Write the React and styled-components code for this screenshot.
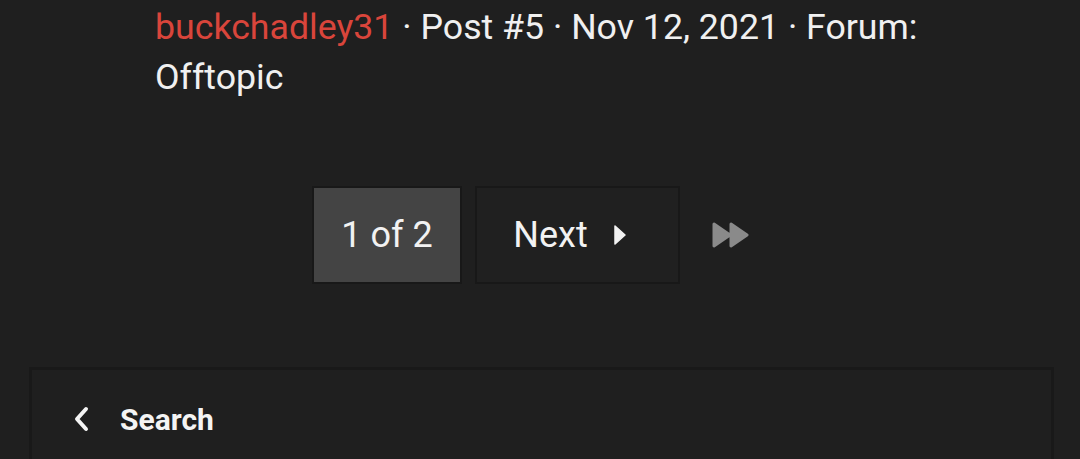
import React from 'react';
import styled, { createGlobalStyle } from 'styled-components';

const GlobalStyle = createGlobalStyle`
  html, body {
    margin: 0;
    padding: 0;
    background: #1f1f1f;
    font-family: Roboto, "Liberation Sans", sans-serif;
    overflow: hidden;
  }
`;

const Page = styled.div`
  width: 1080px;
  height: 459px;
  overflow: hidden;
  background: #1f1f1f;
  color: #f2f2f2;
`;

const Meta = styled.div`
  padding: 2px 140px 0 155px;
  font-size: 35.7px;
  line-height: 50px;
  color: #f0f0f0;
`;

const Author = styled.span`
  color: #d9453b;
  margin-right: 0.25em;
`;

const Pager = styled.div`
  display: flex;
  align-items: center;
  gap: 13px;
  margin: 84px 0 0 312px;
`;

const PageBox = styled.div`
  height: 98px;
  width: ${p => p.$w}px;
  box-sizing: border-box;
  display: flex;
  align-items: center;
  justify-content: center;
  gap: 26px;
  padding-right: ${p => p.$pr || 0}px;
  font-size: 36px;
  color: #f2f2f2;
  background: ${p => (p.$active ? '#444444' : '#202020')};
  border: 2px solid #181818;
`;

const Skip = styled.div`
  display: flex;
  align-items: center;
  margin-left: 19px;
`;

const Panel = styled.div`
  margin: 83px 26px 0 29px;
  height: 120px;
  box-sizing: border-box;
  border: 3px solid #191919;
  border-bottom: none;
  display: flex;
  align-items: flex-start;
  padding: 34px 0 0 40px;
  gap: 28px;
`;

const Title = styled.span`
  font-size: 30px;
  font-weight: 700;
  color: #f4f4f4;
  line-height: 32px;
`;

export default function App() {
  return (
    <Page>
      <GlobalStyle />
      <Meta>
        <Author>buckchadley31</Author>· Post #5 · Nov 12, 2021 · Forum: Offtopic
      </Meta>
      <Pager>
        <PageBox $active $w={150}>1 of 2</PageBox>
        <PageBox $w={205} $pr={16}>
          Next
          <svg width="12" height="20" viewBox="0 0 12 20">
            <path d="M1 1 L11 10 L1 19 Z" fill="#f2f2f2" stroke="#f2f2f2" strokeWidth="1.5" strokeLinejoin="round" />
          </svg>
        </PageBox>
        <Skip>
          <svg width="38" height="26" viewBox="0 0 38 26">
            <path d="M2 2 L18 13 L2 24 Z M19 2 L35 13 L19 24 Z" fill="#8a8a8a" stroke="#8a8a8a" strokeWidth="3" strokeLinejoin="round" />
          </svg>
        </Skip>
      </Pager>
      <Panel>
        <svg width="20" height="30" viewBox="0 0 20 30">
          <path d="M14 5 L5 15 L14 25" fill="none" stroke="#f4f4f4" strokeWidth="4" strokeLinecap="round" strokeLinejoin="round" />
        </svg>
        <Title>Search</Title>
      </Panel>
    </Page>
  );
}
